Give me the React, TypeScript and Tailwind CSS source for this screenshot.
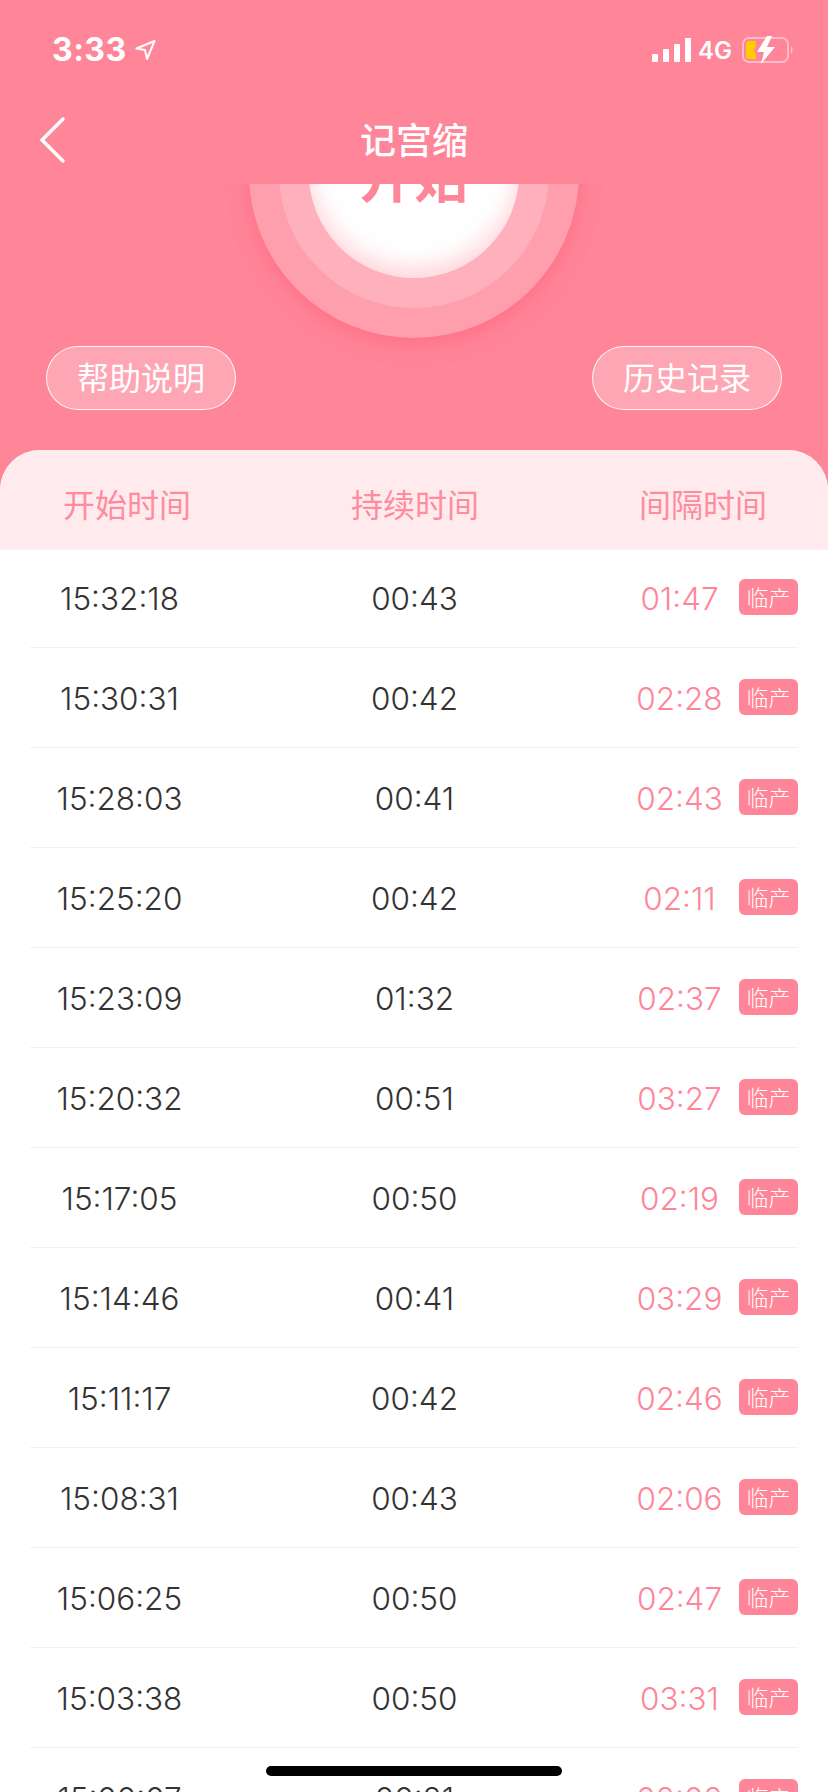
const rows = [
  ["15:32:18", "00:43", "01:47"],
  ["15:30:31", "00:42", "02:28"],
  ["15:28:03", "00:41", "02:43"],
  ["15:25:20", "00:42", "02:11"],
  ["15:23:09", "01:32", "02:37"],
  ["15:20:32", "00:51", "03:27"],
  ["15:17:05", "00:50", "02:19"],
  ["15:14:46", "00:41", "03:29"],
  ["15:11:17", "00:42", "02:46"],
  ["15:08:31", "00:43", "02:06"],
  ["15:06:25", "00:50", "02:47"],
  ["15:03:38", "00:50", "03:31"],
  ["15:00:07", "00:21", "02:02"],
];

function StatusBar() {
  return (
    <div className="flex h-[100px] items-start justify-between pl-[52px] pr-[34px] pt-[36px] text-white">
      <div className="flex items-center gap-[8px]">
        <span className="font-['Inter',sans-serif] text-[32px] font-bold leading-[28px] tracking-[0.5px]">3:33</span>
        <svg width="21" height="22" viewBox="0 0 21 22" fill="none">
          <path d="M19.5 2 L1.5 9.5 L10 11 L12 20 Z" stroke="white" strokeWidth="2" strokeLinejoin="round" />
        </svg>
      </div>
      <div className="flex h-[28px] items-center">
        <div className="mr-[7px] flex h-[24px] items-end gap-[5px]">
          <div className="h-[8px] w-[6px] rounded-[1px] bg-white" />
          <div className="h-[13px] w-[6px] rounded-[1px] bg-white" />
          <div className="h-[18px] w-[6px] rounded-[1px] bg-white" />
          <div className="h-[24px] w-[6px] rounded-[1px] bg-white" />
        </div>
        <span className="mr-[10px] pt-[2px] font-['Inter',sans-serif] text-[24px] font-semibold leading-[24px]">4G</span>
        <svg width="52" height="28" viewBox="0 0 52 28" fill="none">
          <rect x="1" y="2" width="45" height="24" rx="6" stroke="white" strokeOpacity="0.45" strokeWidth="2" />
          <path d="M4 8 Q4 5 7 5 H14 V10.5 L11.5 14 L14 18 V23 H7 Q4 23 4 20 Z" fill="#FFCC00" />
          <path d="M25 0 L15 16 H22 L19 28 L33 11 H25 L30 0 Z" fill="white" />
          <path d="M49 10 Q52 14 49 18 Z" fill="white" fillOpacity="0.5" />
        </svg>
      </div>
    </div>
  );
}

function NavBar() {
  return (
    <div className="relative flex h-[84px] items-start justify-center">
      <svg className="absolute left-[38px] top-[17px]" width="28" height="46" viewBox="0 0 28 46" fill="none">
        <path d="M25 2 L4 23 L25 44" stroke="white" strokeWidth="3.5" strokeLinecap="round" strokeLinejoin="round" />
      </svg>
      <h1 className="mt-[16px] text-[36px] font-medium leading-[44px] text-white">记宫缩</h1>
    </div>
  );
}

function Dial() {
  return (
    <div className="-mt-[176px] flex justify-center">
      <div className="flex h-[330px] w-[330px] items-center justify-center rounded-full bg-[#FF9EAD] shadow-[0_5px_20px_rgba(255,105,130,0.8)]">
        <div className="flex h-[270px] w-[270px] items-center justify-center rounded-full bg-[#FFB0BD]">
          <div className="flex h-[210px] w-[210px] items-center justify-center rounded-full bg-white shadow-[inset_0_-10px_22px_rgba(255,134,152,0.35)]">
            <span className="text-[55px] font-bold leading-none text-[#FF8598]">开始</span>
          </div>
        </div>
      </div>
    </div>
  );
}

function PillButton({ label }: { label: string }) {
  return (
    <button className="flex h-[64px] w-[190px] items-center justify-center rounded-full border border-white/90 bg-[#FFA6B4] pb-[4px] text-[32px] leading-none text-white">
      {label}
    </button>
  );
}

export default function App() {
  return (
    <div className="relative h-[1792px] w-[828px] overflow-hidden bg-[#FF8598] font-['Noto_Sans_CJK_SC',sans-serif]">
      <div className="relative z-10 bg-[#FF8598]">
        <StatusBar />
        <NavBar />
      </div>
      <div className="h-[266px] overflow-hidden">
        <Dial />
        <div className="mt-[8px] flex justify-between px-[46px]">
          <PillButton label="帮助说明" />
          <PillButton label="历史记录" />
        </div>
      </div>
      <div className="h-[1342px] overflow-hidden rounded-t-[40px] bg-white">
        <div className="flex h-[100px] items-center justify-between bg-[#FFEBEE] pl-[63px] pr-[61px] pt-[5px] text-[32px] leading-none text-[#FF8B9E]">
          <span>开始时间</span>
          <span>持续时间</span>
          <span>间隔时间</span>
        </div>
        <div className="-mt-[2px]">
          {rows.map((r, i) => (
            <div
              key={i}
              className="mx-[30px] grid h-[100px] grid-cols-[179px_411px_119px_59px] items-center border-b border-[#F2F2F2] text-center font-['Inter',sans-serif] text-[31.5px] font-light text-[#333333]"
            >
              <span className="pt-[2px]">{r[0]}</span>
              <span className="pt-[2px]">{r[1]}</span>
              <span className="pt-[2px] text-[#FF8598]">{r[2]}</span>
              <span className="mb-[2px] flex h-[36px] items-center justify-center rounded-[6px] bg-[#FF8598] pb-[2px] font-['Noto_Sans_CJK_SC',sans-serif] text-[22px] leading-none text-white">
                临产
              </span>
            </div>
          ))}
        </div>
      </div>
      <div className="absolute left-[266px] top-[1766px] z-20 h-[10px] w-[296px] rounded-full bg-black" />
    </div>
  );
}
